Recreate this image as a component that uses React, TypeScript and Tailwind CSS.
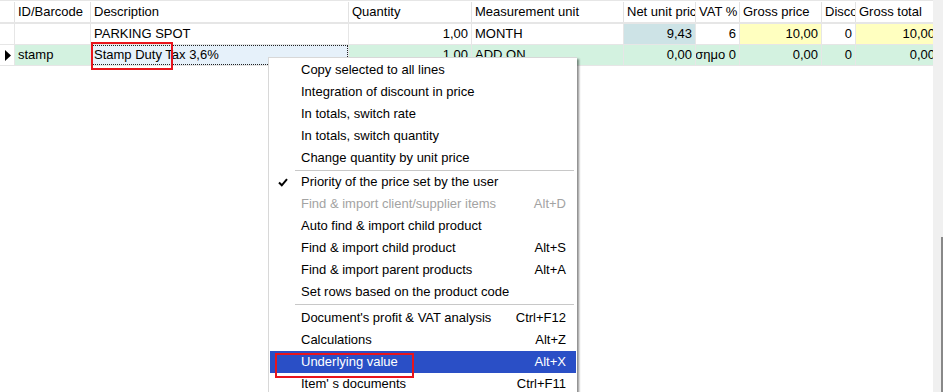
import React from 'react';

type Col = { key: string; label: string; w: number; right?: boolean };

const cols: Col[] = [
  { key: 'ind', label: '', w: 15 },
  { key: 'id', label: 'ID/Barcode', w: 76 },
  { key: 'desc', label: 'Description', w: 258 },
  { key: 'qty', label: 'Quantity', w: 123, right: true },
  { key: 'unit', label: 'Measurement unit', w: 152 },
  { key: 'net', label: 'Net unit price', w: 72, right: true },
  { key: 'vat', label: 'VAT %', w: 44, right: true },
  { key: 'gross', label: 'Gross price', w: 82, right: true },
  { key: 'disc', label: 'Discount', w: 34, right: true },
  { key: 'total', label: 'Gross total', w: 83, right: true },
];

const rows: Record<string, string>[] = [
  { ind: '', id: '', desc: 'PARKING SPOT', qty: '1,00', unit: 'MONTH', net: '9,43', vat: '6', gross: '10,00', disc: '0', total: '10,00' },
  { ind: '', id: 'stamp', desc: 'Stamp Duty Tax 3,6%', qty: '1,00', unit: 'ADD ON', net: '0,00', vat: 'σημο 0', gross: '0,00', disc: '0', total: '0,00' },
];

function cellBg(row: number, key: string) {
  if (row === 0) {
    if (key === 'net') return 'bg-[#cde3e6]';
    if (key === 'gross' || key === 'total') return 'bg-[#ffffc0]';
    return 'bg-white';
  }
  if (key === 'ind') return 'bg-white';
  if (key === 'desc') return 'bg-[#e6f1fa]';
  return 'bg-[#d3f2e0]';
}

type Item = { label: string; keys?: string; disabled?: boolean; checked?: boolean; active?: boolean; boxed?: boolean };

const group1: Item[] = [
  { label: 'Copy selected to all lines' },
  { label: 'Integration of discount in price' },
  { label: 'In totals, switch rate' },
  { label: 'In totals, switch quantity' },
  { label: 'Change quantity by unit price' },
];
const group2: Item[] = [
  { label: 'Priority of the price set by the user', checked: true },
  { label: 'Find & import client/supplier items', keys: 'Alt+D', disabled: true },
  { label: 'Auto find & import child product' },
  { label: 'Find & import child product', keys: 'Alt+S' },
  { label: 'Find & import parent products', keys: 'Alt+A' },
  { label: 'Set rows based on the product code' },
];
const group3: Item[] = [
  { label: "Document's profit & VAT analysis", keys: 'Ctrl+F12' },
  { label: 'Calculations', keys: 'Alt+Z' },
  { label: 'Underlying value', keys: 'Alt+X', active: true, boxed: true },
  { label: "Item' s documents", keys: 'Ctrl+F11' },
];

function MenuItem({ item }: { item: Item }) {
  const color = item.active ? 'text-white bg-[#2a4fc6]' : item.disabled ? 'text-[#a3a3a3]' : 'text-black';
  return (
    <div className={`relative flex items-center h-[22px] pl-[31px] pr-[10px] mx-[1px] ${color}`}>
      {item.checked && (
        <svg className="absolute left-[8px] top-[7px]" width="10" height="9" viewBox="0 0 10 9">
          <path d="M1 4.5 L3.8 7.3 L9 1.2" stroke="black" strokeWidth="2" fill="none" />
        </svg>
      )}
      <span className="flex-1 whitespace-nowrap">{item.label}</span>
      {item.keys && <span className="whitespace-nowrap">{item.keys}</span>}
      {item.boxed && (
        <div className="absolute left-[5px] top-[2px] w-[139px] h-[25px] border-2 border-[#e8141c]" />
      )}
    </div>
  );
}

function Sep({ h }: { h: string }) {
  return (
    <div className={`${h} flex items-center pl-[26px] pr-[3px]`}>
      <div className="h-px w-full bg-[#c8c8c8]" />
    </div>
  );
}

export default function App() {
  return (
    <div className="relative w-[943px] h-[392px] overflow-hidden flex bg-white text-[13px] text-black font-['Liberation_Sans',Arial,sans-serif]">
      <div className="w-[933px] overflow-hidden flex flex-col">
        <div className="h-[2px] border-t border-[#e6e6e6]" />
        {/* header */}
        <div className="flex h-[22px] border-b-2 border-[#e6e6e6]">
          {cols.map(c => (
            <div
              key={c.key}
              style={{ width: c.w }}
              className="shrink-0 border-r border-[#e2e2e2] pl-[3px] flex items-center overflow-hidden whitespace-nowrap"
            >
              {c.label}
            </div>
          ))}
        </div>
        {rows.map((r, i) => (
          <div key={i} className="flex h-[21px] border-b border-[#e6e6e6]">
            {cols.map(c => (
              <div
                key={c.key}
                style={{ width: c.w }}
                className={`relative shrink-0 border-r border-[#e6e6e6] px-[3px] flex items-center overflow-hidden whitespace-nowrap ${cellBg(i, c.key)} ${c.right ? 'justify-end' : ''}`}
              >
                {c.key === 'ind' && i === 1 && (
                  <svg width="6" height="11" viewBox="0 0 6 11" className="ml-[2px]">
                    <path d="M0 0 L6 5.5 L0 11 Z" fill="black" />
                  </svg>
                )}
                {c.key === 'desc' && i === 1 && (
                  <div className="absolute inset-0 border border-dotted border-[#222]" />
                )}
                <span className="relative">{r[c.key]}</span>
              </div>
            ))}
          </div>
        ))}
      </div>
      <div className="w-[10px] bg-[#f0f0f0] flex flex-col">
        <div className="ml-[8px] mt-[237px] w-[2px] h-[155px] bg-[#888888]" />
      </div>

      {/* red box around Stamp Duty */}
      <div className="absolute left-[91px] top-[42px] w-[82px] h-[28px] border-2 border-[#e8141c]" />

      {/* context menu */}
      <div className="absolute left-[268px] top-[57px] w-[309px] bg-white border-l border-t border-[#d8d8d8] shadow-[2px_2px_2px_rgba(0,0,0,0.45)] pt-[1px] pb-2">
        {group1.map(it => <MenuItem key={it.label} item={it} />)}
        <Sep h="h-[2px]" />
        {group2.map(it => <MenuItem key={it.label} item={it} />)}
        <Sep h="h-[3px]" />
        <div className="h-px" />
        {group3.map(it => <MenuItem key={it.label} item={it} />)}
      </div>
    </div>
  );
}
